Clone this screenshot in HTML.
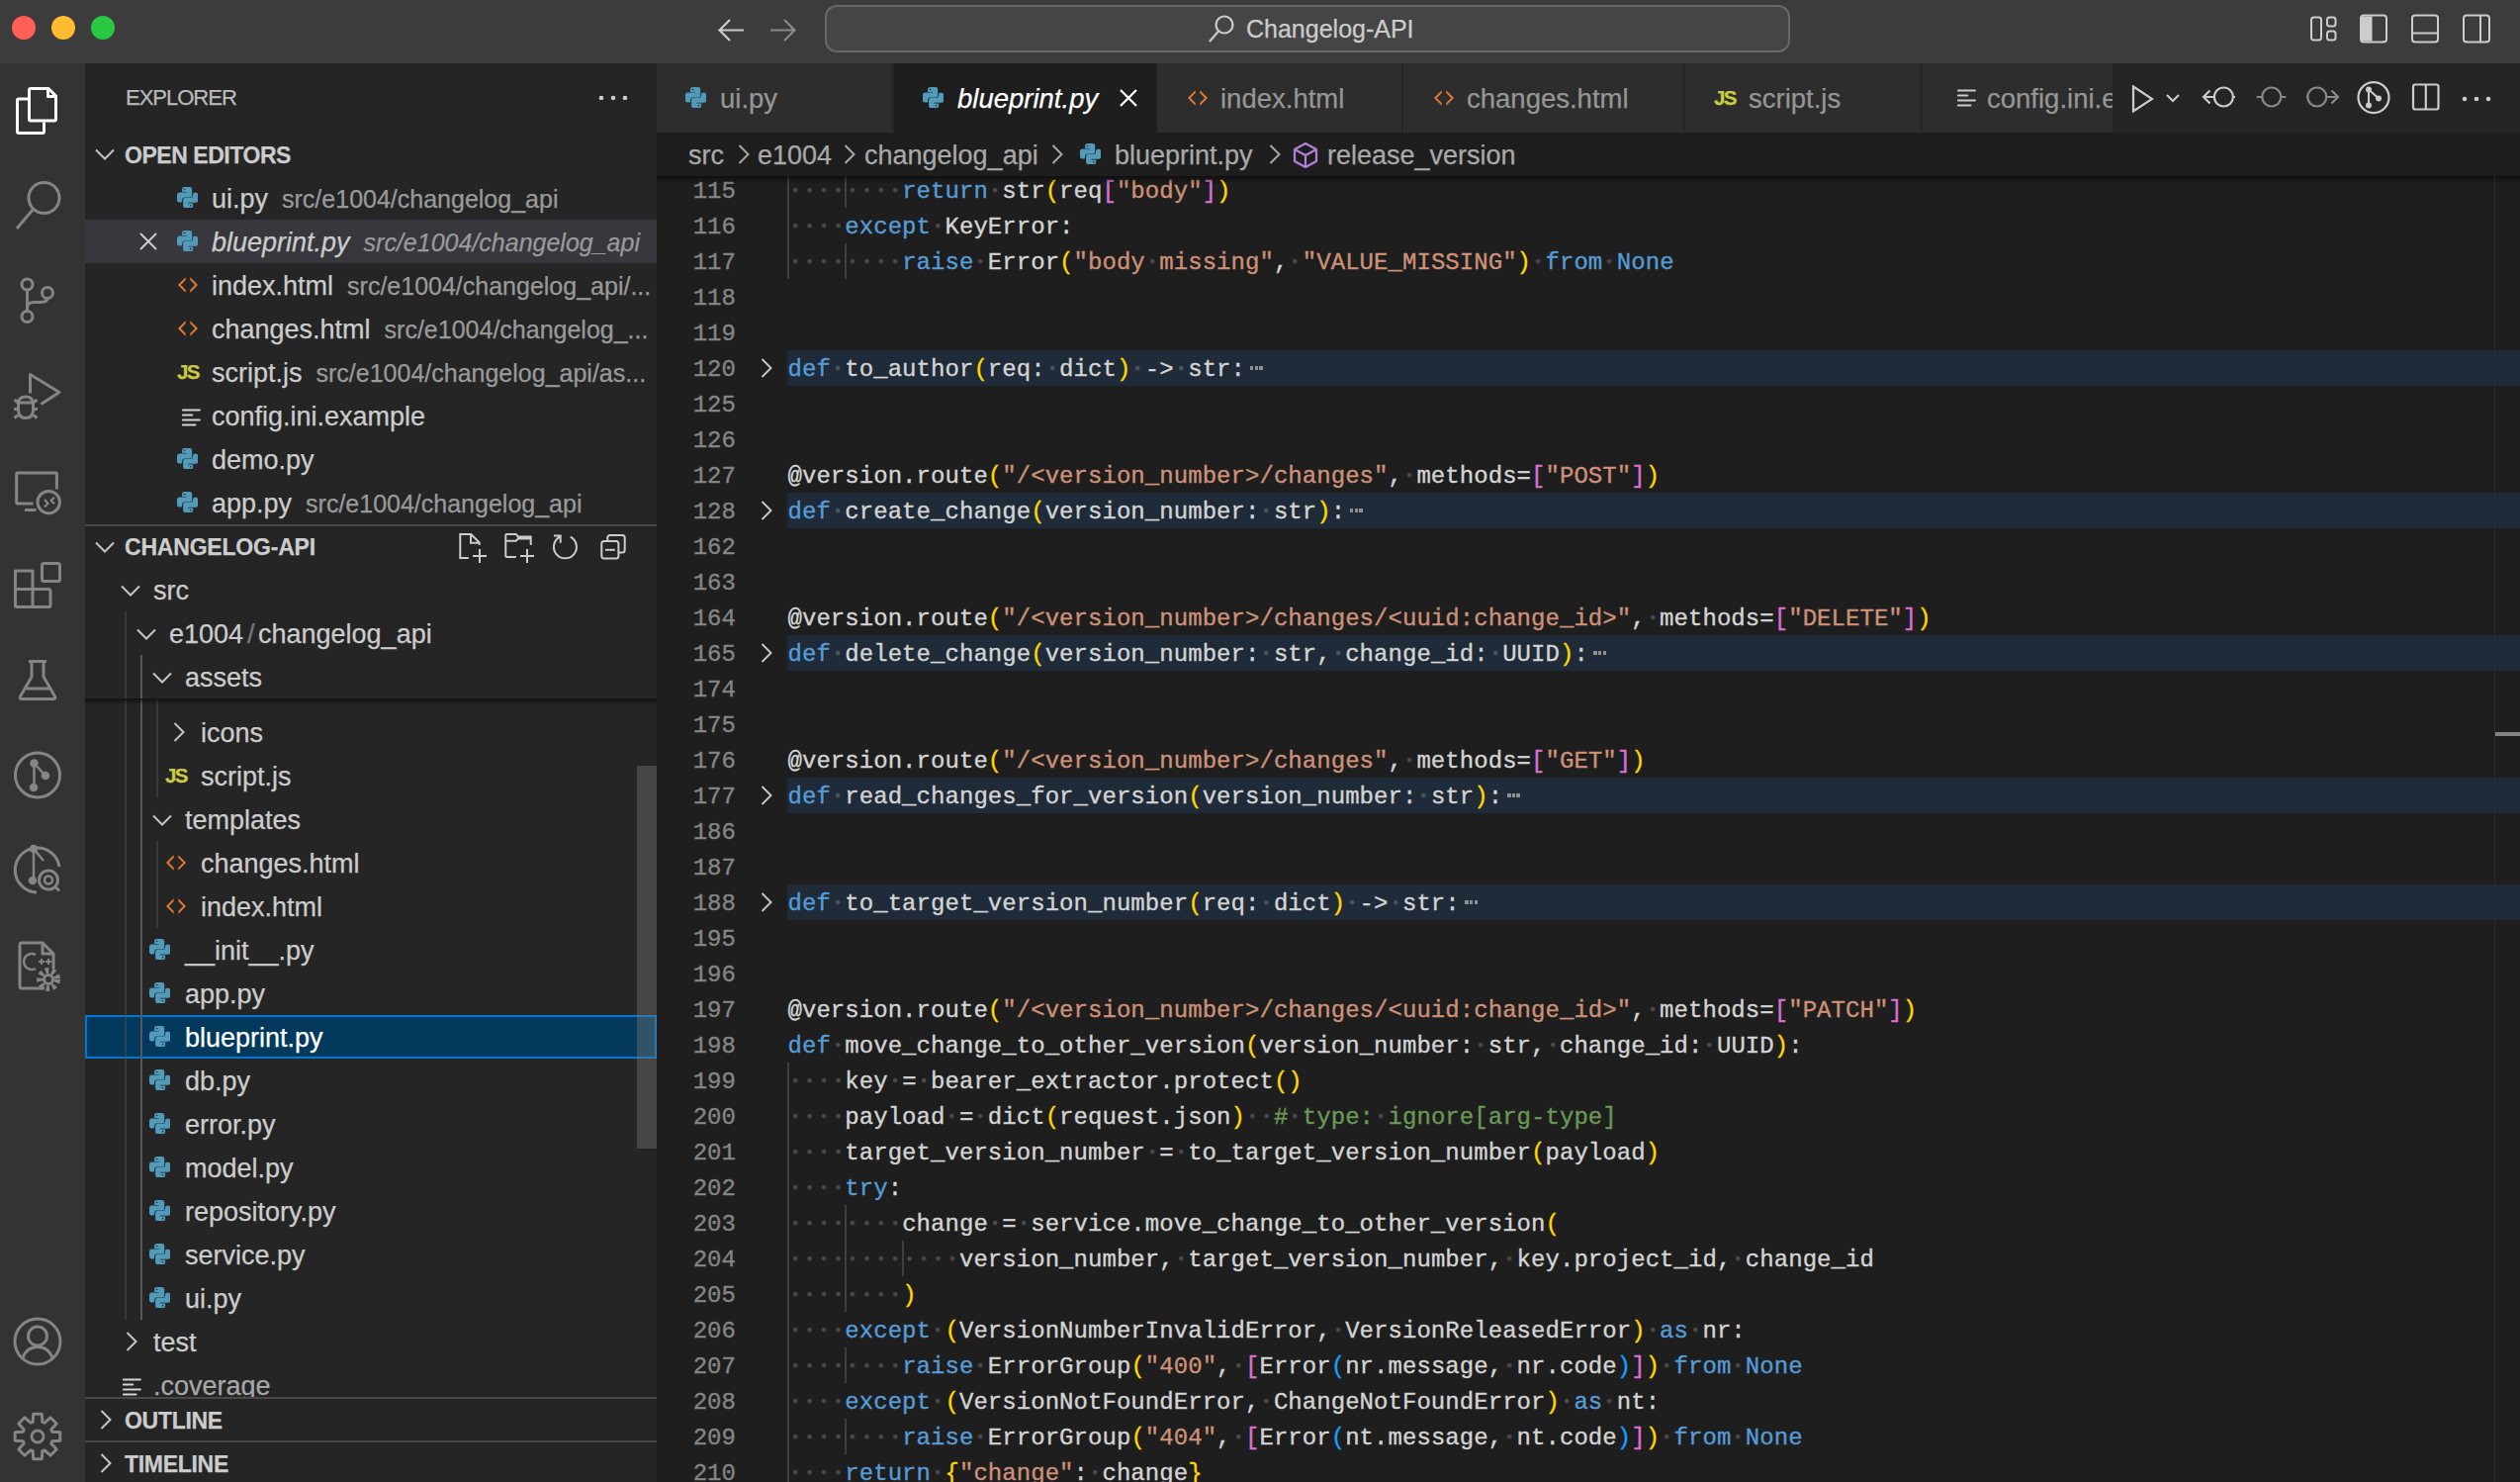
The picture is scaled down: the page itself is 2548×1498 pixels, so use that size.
<!DOCTYPE html><html><head><meta charset="utf-8"><style>
html,body{margin:0;padding:0;width:2548px;height:1498px;overflow:hidden;background:#1e1e1e;position:relative;font-family:'Liberation Sans', sans-serif;-webkit-text-stroke:0.25px currentColor}
div,svg{box-sizing:border-box}
.ln{position:absolute;left:664px;width:1884px;height:36px;font-family:'Liberation Mono', monospace;font-size:24px;line-height:36px;white-space:pre;color:#d4d4d4;letter-spacing:0.05px;-webkit-text-stroke:0.35px currentColor}
.num{position:absolute;left:0;top:2px;width:80px;text-align:right;color:#858585}
.code{position:absolute;left:132.5px;top:2px}
.fold{position:absolute;left:132px;right:0;top:0;height:36px;background:#1f2b38}
.ws{background:radial-gradient(circle at 50% 45%,rgba(227,228,226,0.22) 0,rgba(227,228,226,0.22) 1.8px,rgba(227,228,226,0) 2.7px) 0 0/14.45px 100% repeat-x}
.kw{color:#569cd6} .str{color:#ce9178} .cm{color:#6a9955}
.b1{color:#ffd700} .b2{color:#da70d6} .b3{color:#179fff}
.guide{position:absolute;top:0;width:2px;height:36px;background:#404040}
</style></head><body><div style="position:absolute;left:0px;top:0px;width:2548px;height:64px;background:#3c3c3c;"></div><div style="position:absolute;left:12px;top:16px;width:24px;height:24px;border-radius:50%;background:#ff5f57"></div><div style="position:absolute;left:52px;top:16px;width:24px;height:24px;border-radius:50%;background:#febc2e"></div><div style="position:absolute;left:92px;top:16px;width:24px;height:24px;border-radius:50%;background:#28c840"></div><svg style="position:absolute;left:725px;top:18px" width="30" height="26" viewBox="0 0 30 26"><path d="M2.5 12.5 H27 M13 2 L2.5 12.5 L13 23" fill="none" stroke="#cccccc" stroke-width="2.2"/></svg><svg style="position:absolute;left:777px;top:18px" width="30" height="26" viewBox="0 0 30 26"><path d="M2 12.5 H26.5 M16 2 L26.5 12.5 L16 23" fill="none" stroke="#8a8a8a" stroke-width="2.2"/></svg><div style="position:absolute;left:834px;top:5px;width:976px;height:48px;border:2px solid #686868;border-radius:12px;background:#454545"></div><svg style="position:absolute;left:1220px;top:13px" width="30" height="32" viewBox="0 0 30 32"><circle cx="18" cy="12" r="8.5" fill="none" stroke="#cccccc" stroke-width="2.2"/><path d="M12 18.5 L3 29" stroke="#cccccc" stroke-width="2.2"/></svg><div style="position:absolute;left:1260px;top:13.5px;font-family:'Liberation Sans', sans-serif;font-size:25px;line-height:30px;color:#cccccc;white-space:pre;">Changelog-API</div><svg style="position:absolute;left:2334px;top:14px" width="200" height="32" viewBox="0 0 200 32">
<g fill="none" stroke="#cccccc" stroke-width="2">
<rect x="3" y="3.5" width="10" height="23" rx="2.5"/><rect x="19" y="3.5" width="8.5" height="9" rx="2.5"/><rect x="19" y="17.5" width="8.5" height="9" rx="2.5"/>
<rect x="53" y="1.5" width="26" height="27" rx="3"/>
<rect x="105" y="1.5" width="26" height="27" rx="3"/><path d="M105 19.5 H131"/>
<rect x="157" y="1.5" width="26" height="27" rx="3"/><path d="M174 1.5 V28.5"/>
</g><path d="M55 2.5 H64.5 V27.5 H55 Q54 27.5 54 26.5 V3.5 Q54 2.5 55 2.5Z" fill="#cccccc"/></svg><div style="position:absolute;left:0px;top:64px;width:86px;height:1434px;background:#333333;"></div><svg style="position:absolute;left:0;top:64px" width="86" height="1434" viewBox="0 64 86 1434">
<g fill="none" stroke-width="3" stroke-linejoin="round">
<path stroke="#ffffff" d="M28.5 100 H19 Q17.5 100 17.5 101.5 V133 Q17.5 134.5 19 134.5 H43 Q44.5 134.5 44.5 133 V123.5"/>
<path stroke="#ffffff" d="M31 89.5 H49 L56.5 97 V120.5 Q56.5 122 55 122 H31 Q29.5 122 29.5 120.5 V91 Q29.5 89.5 31 89.5 Z M48.5 89.5 V97.5 H56.5"/>
<circle stroke="#858585" cx="44.5" cy="200" r="15.5"/><path stroke="#858585" d="M33.5 211.5 L17 231"/>
<circle stroke="#858585" cx="27.5" cy="287.5" r="5.5"/><circle stroke="#858585" cx="27.5" cy="320" r="5.5"/><circle stroke="#858585" cx="48" cy="296" r="5.5"/>
<path stroke="#858585" d="M27.5 293 V314.5 M48 301.5 Q48 305.5 40 305.5 H34 Q27.5 305.5 27.5 311"/>
<path stroke="#858585" d="M30.5 397.5 V378.5 L60 396.5 L41.5 408.5"/>
<path stroke="#858585" d="M18.5 408 Q18.5 401 26 401 Q33.5 401 33.5 408 V414 Q33.5 422.5 26 422.5 Q18.5 422.5 18.5 414 Z M18.5 407 H33.5 M14 413.5 H18.5 M33.5 413.5 H38 M14.5 404 L19 407.5 M37.5 404 L33 407.5 M14.5 422.5 L19.5 418.5 M37.5 422.5 L32.5 418.5"/>
<path stroke="#858585" d="M33.5 509 H18 Q16.7 509 16.7 507.7 V479.3 Q16.7 478 18 478 H56 Q57.4 478 57.4 479.3 V494.5 M25 515.5 H36.5"/>
<circle stroke="#858585" cx="49.2" cy="507.6" r="11.2"/><path stroke="#858585" stroke-width="2.2" d="M45 505 L48.5 508.8 L45 512.5 M55 502.7 L51.6 505.9 L55 509.3"/>
<path stroke="#858585" d="M15.5 577 H33 V613.5 H17 Q15.5 613.5 15.5 612 Z M15.5 595.5 H51 M51 595.5 V612 Q51 613.5 49.5 613.5 H33"/><rect stroke="#858585" x="42.5" y="569.5" width="18" height="18" rx="2"/>
<path stroke="#858585" d="M29 668.5 H47 M32 668.5 V684 L20.5 704 Q19.5 706.5 22 706.5 H54 Q56.5 706.5 55.5 704 L44 684 V668.5 M25 696 H51"/>
<circle stroke="#858585" cx="38" cy="783.5" r="22.5"/>
<circle cx="34.5" cy="771.5" r="4.3" fill="#858585" stroke="none"/><circle cx="34" cy="796" r="4.3" fill="#858585" stroke="none"/><circle cx="46" cy="784" r="4.3" fill="#858585" stroke="none"/><path stroke="#858585" stroke-width="2.5" d="M34.5 771.5 V796 M34.5 771.5 L46 784"/>
<path stroke="#858585" d="M60 876 A22.5 22.5 0 1 0 37 902"/>
<circle cx="34" cy="858" r="4.3" fill="#858585" stroke="none"/><circle cx="33" cy="890" r="4.3" fill="#858585" stroke="none"/><path stroke="#858585" stroke-width="2.5" d="M34 858 V890 M34 858 L44 870"/>
<circle stroke="#858585" cx="49" cy="889.5" r="9.5"/><circle stroke="#858585" stroke-width="2.5" cx="49" cy="889.5" r="4"/><path stroke="#858585" d="M55.5 896 L60 900.5"/>
<path stroke="#858585" d="M45 999 H22 Q20 999 20 997 V955 Q20 953 22 953 H43 L54 964 V979 M43 953 V964 H54"/>
<path stroke="#858585" stroke-width="2.5" d="M36 965 A8 8 0 1 0 36 979"/><path stroke="#858585" stroke-width="2" d="M39 972 H45 M42 969 V975 M46 972 H52 M49 969 V975"/>
<circle stroke="#858585" stroke-width="6" stroke-dasharray="3.5 3" cx="49" cy="990" r="9"/><circle stroke="#858585" cx="49" cy="990" r="4.5"/>
<circle stroke="#858585" cx="38" cy="1356" r="23"/><circle stroke="#858585" cx="38" cy="1350.5" r="9.5"/><path stroke="#858585" d="M23 1372.5 Q27 1361.5 38 1361.5 Q49 1361.5 53 1372.5"/>
</g>
<path fill="none" stroke="#858585" stroke-width="3" stroke-linejoin="round" d="M60.8 1447.7 L60.8 1456.3 L52.7 1456.8 L51.8 1459.0 L57.2 1465.0 L51.0 1471.2 L45.0 1465.8 L42.8 1466.7 L42.3 1474.8 L33.7 1474.8 L33.2 1466.7 L31.0 1465.8 L25.0 1471.2 L18.8 1465.0 L24.2 1459.0 L23.3 1456.8 L15.2 1456.3 L15.2 1447.7 L23.3 1447.2 L24.2 1445.0 L18.8 1439.0 L25.0 1432.8 L31.0 1438.2 L33.2 1437.3 L33.7 1429.2 L42.3 1429.2 L42.8 1437.3 L45.0 1438.2 L51.0 1432.8 L57.2 1439.0 L51.8 1445.0 L52.7 1447.2Z"/><circle cx="38" cy="1452" r="6" fill="none" stroke="#858585" stroke-width="3"/>
</svg><div style="position:absolute;left:86px;top:64px;width:578px;height:1434px;background:#252526;"></div><div style="position:absolute;left:127px;top:86px;font-family:'Liberation Sans', sans-serif;font-size:22px;line-height:26px;color:#bbbbbb;white-space:pre;letter-spacing:-1px">EXPLORER</div><svg style="position:absolute;left:604px;top:94px" width="32" height="10" viewBox="0 0 32 10"><g fill="#cccccc"><circle cx="4" cy="5" r="2.3"/><circle cx="16" cy="5" r="2.3"/><circle cx="28" cy="5" r="2.3"/></g></svg><svg style="position:absolute;left:96px;top:150px" width="20" height="12" viewBox="0 0 20 12"><path d="M1 1.5 L10 10.5 L19 1.5" fill="none" stroke="#c5c5c5" stroke-width="2"/></svg><div style="position:absolute;left:126px;top:144px;font-family:'Liberation Sans', sans-serif;font-size:23px;line-height:26px;color:#cccccc;white-space:pre;font-weight:bold;letter-spacing:-0.45px">OPEN EDITORS</div><svg style="position:absolute;left:179px;top:189px" width="21.3" height="21.3" viewBox="0 0 21.3 21.3"><path fill="#519aba" d="M7.6 0H12.7A2.5 2.5 0 0 1 15.2 2.5V8A2.5 2.5 0 0 1 12.7 10.5H7.7A2.5 2.5 0 0 0 5.2 13V14A1.5 1.5 0 0 1 3.7 15.5H2.5A2.5 2.5 0 0 1 0 13V8A2.5 2.5 0 0 1 2.5 5.5H10V4.9H5.1V2.5A2.5 2.5 0 0 1 7.6 0Z"/><path fill="#519aba" transform="rotate(180 10.65 10.65)" d="M7.6 0H12.7A2.5 2.5 0 0 1 15.2 2.5V8A2.5 2.5 0 0 1 12.7 10.5H7.7A2.5 2.5 0 0 0 5.2 13V14A1.5 1.5 0 0 1 3.7 15.5H2.5A2.5 2.5 0 0 1 0 13V8A2.5 2.5 0 0 1 2.5 5.5H10V4.9H5.1V2.5A2.5 2.5 0 0 1 7.6 0Z"/><circle cx="7.7" cy="2.6" r="0.75" fill="#1e1e1e"/><circle cx="13.6" cy="18.7" r="0.75" fill="#1e1e1e"/></svg><div style="position:absolute;left:214px;top:179px;height:44px;font-family:'Liberation Sans', sans-serif;font-size:27px;line-height:44px;color:#cccccc;white-space:pre;">ui.py<span style="color:#9a9a9a;font-size:25px;margin-left:14px">src/e1004/changelog_api</span></div><div style="position:absolute;left:86px;top:222px;width:578px;height:44px;background:#37373d;"></div><svg style="position:absolute;left:140px;top:234px" width="20" height="20" viewBox="0 0 20 20"><path d="M2 2 L18 18 M18 2 L2 18" stroke="#cccccc" stroke-width="2"/></svg><svg style="position:absolute;left:179px;top:233px" width="21.3" height="21.3" viewBox="0 0 21.3 21.3"><path fill="#519aba" d="M7.6 0H12.7A2.5 2.5 0 0 1 15.2 2.5V8A2.5 2.5 0 0 1 12.7 10.5H7.7A2.5 2.5 0 0 0 5.2 13V14A1.5 1.5 0 0 1 3.7 15.5H2.5A2.5 2.5 0 0 1 0 13V8A2.5 2.5 0 0 1 2.5 5.5H10V4.9H5.1V2.5A2.5 2.5 0 0 1 7.6 0Z"/><path fill="#519aba" transform="rotate(180 10.65 10.65)" d="M7.6 0H12.7A2.5 2.5 0 0 1 15.2 2.5V8A2.5 2.5 0 0 1 12.7 10.5H7.7A2.5 2.5 0 0 0 5.2 13V14A1.5 1.5 0 0 1 3.7 15.5H2.5A2.5 2.5 0 0 1 0 13V8A2.5 2.5 0 0 1 2.5 5.5H10V4.9H5.1V2.5A2.5 2.5 0 0 1 7.6 0Z"/><circle cx="7.7" cy="2.6" r="0.75" fill="#1e1e1e"/><circle cx="13.6" cy="18.7" r="0.75" fill="#1e1e1e"/></svg><div style="position:absolute;left:214px;top:223px;height:44px;font-family:'Liberation Sans', sans-serif;font-size:27px;line-height:44px;color:#cccccc;white-space:pre;font-style:italic;">blueprint.py<span style="color:#9a9a9a;font-size:25px;margin-left:14px">src/e1004/changelog_api</span></div><svg style="position:absolute;left:179.5px;top:279.7px" width="20" height="16" viewBox="0 0 20 15.4"><path fill="#e37933" d="M7.7 0L0 7.7L7.7 15.4V12.6L2.8 7.7L7.7 2.8ZM12.3 0L20 7.7L12.3 15.4V12.6L17.2 7.7L12.3 2.8Z"/></svg><div style="position:absolute;left:214px;top:267px;height:44px;font-family:'Liberation Sans', sans-serif;font-size:27px;line-height:44px;color:#cccccc;white-space:pre;">index.html<span style="color:#9a9a9a;font-size:25px;margin-left:14px">src/e1004/changelog_api/...</span></div><svg style="position:absolute;left:179.5px;top:323.7px" width="20" height="16" viewBox="0 0 20 15.4"><path fill="#e37933" d="M7.7 0L0 7.7L7.7 15.4V12.6L2.8 7.7L7.7 2.8ZM12.3 0L20 7.7L12.3 15.4V12.6L17.2 7.7L12.3 2.8Z"/></svg><div style="position:absolute;left:214px;top:311px;height:44px;font-family:'Liberation Sans', sans-serif;font-size:27px;line-height:44px;color:#cccccc;white-space:pre;">changes.html<span style="color:#9a9a9a;font-size:25px;margin-left:14px">src/e1004/changelog_...</span></div><div style="position:absolute;left:179px;top:365px;font:bold 20.5px/21px 'Liberation Sans', sans-serif;color:#cbcb41;letter-spacing:-1.6px">JS</div><div style="position:absolute;left:214px;top:355px;height:44px;font-family:'Liberation Sans', sans-serif;font-size:27px;line-height:44px;color:#cccccc;white-space:pre;">script.js<span style="color:#9a9a9a;font-size:25px;margin-left:14px">src/e1004/changelog_api/as...</span></div><svg style="position:absolute;left:184px;top:412.5px" width="19" height="19" viewBox="0 0 19 19"><path d="M1 1.5h16.8M1 6.5h9.2M1 11.5h16.8M1 16.5h12.4" stroke="#d4d4d4" stroke-width="2.2" stroke-linecap="round"/></svg><div style="position:absolute;left:214px;top:399px;height:44px;font-family:'Liberation Sans', sans-serif;font-size:27px;line-height:44px;color:#cccccc;white-space:pre;">config.ini.example</div><svg style="position:absolute;left:179px;top:453px" width="21.3" height="21.3" viewBox="0 0 21.3 21.3"><path fill="#519aba" d="M7.6 0H12.7A2.5 2.5 0 0 1 15.2 2.5V8A2.5 2.5 0 0 1 12.7 10.5H7.7A2.5 2.5 0 0 0 5.2 13V14A1.5 1.5 0 0 1 3.7 15.5H2.5A2.5 2.5 0 0 1 0 13V8A2.5 2.5 0 0 1 2.5 5.5H10V4.9H5.1V2.5A2.5 2.5 0 0 1 7.6 0Z"/><path fill="#519aba" transform="rotate(180 10.65 10.65)" d="M7.6 0H12.7A2.5 2.5 0 0 1 15.2 2.5V8A2.5 2.5 0 0 1 12.7 10.5H7.7A2.5 2.5 0 0 0 5.2 13V14A1.5 1.5 0 0 1 3.7 15.5H2.5A2.5 2.5 0 0 1 0 13V8A2.5 2.5 0 0 1 2.5 5.5H10V4.9H5.1V2.5A2.5 2.5 0 0 1 7.6 0Z"/><circle cx="7.7" cy="2.6" r="0.75" fill="#1e1e1e"/><circle cx="13.6" cy="18.7" r="0.75" fill="#1e1e1e"/></svg><div style="position:absolute;left:214px;top:443px;height:44px;font-family:'Liberation Sans', sans-serif;font-size:27px;line-height:44px;color:#cccccc;white-space:pre;">demo.py</div><svg style="position:absolute;left:179px;top:497px" width="21.3" height="21.3" viewBox="0 0 21.3 21.3"><path fill="#519aba" d="M7.6 0H12.7A2.5 2.5 0 0 1 15.2 2.5V8A2.5 2.5 0 0 1 12.7 10.5H7.7A2.5 2.5 0 0 0 5.2 13V14A1.5 1.5 0 0 1 3.7 15.5H2.5A2.5 2.5 0 0 1 0 13V8A2.5 2.5 0 0 1 2.5 5.5H10V4.9H5.1V2.5A2.5 2.5 0 0 1 7.6 0Z"/><path fill="#519aba" transform="rotate(180 10.65 10.65)" d="M7.6 0H12.7A2.5 2.5 0 0 1 15.2 2.5V8A2.5 2.5 0 0 1 12.7 10.5H7.7A2.5 2.5 0 0 0 5.2 13V14A1.5 1.5 0 0 1 3.7 15.5H2.5A2.5 2.5 0 0 1 0 13V8A2.5 2.5 0 0 1 2.5 5.5H10V4.9H5.1V2.5A2.5 2.5 0 0 1 7.6 0Z"/><circle cx="7.7" cy="2.6" r="0.75" fill="#1e1e1e"/><circle cx="13.6" cy="18.7" r="0.75" fill="#1e1e1e"/></svg><div style="position:absolute;left:214px;top:487px;height:44px;font-family:'Liberation Sans', sans-serif;font-size:27px;line-height:44px;color:#cccccc;white-space:pre;">app.py<span style="color:#9a9a9a;font-size:25px;margin-left:14px">src/e1004/changelog_api</span></div><div style="position:absolute;left:86px;top:530px;width:578px;height:2px;background:#484848;"></div><svg style="position:absolute;left:96px;top:547px" width="20" height="12" viewBox="0 0 20 12"><path d="M1 1.5 L10 10.5 L19 1.5" fill="none" stroke="#c5c5c5" stroke-width="2"/></svg><div style="position:absolute;left:126px;top:540px;font-family:'Liberation Sans', sans-serif;font-size:23px;line-height:26px;color:#cccccc;white-space:pre;font-weight:bold;letter-spacing:-0.2px">CHANGELOG-API</div><svg style="position:absolute;left:450px;top:530px" width="200" height="50" viewBox="450 530 200 50"><g fill="none" stroke="#cccccc" stroke-width="2">
<path d="M473.8 564 H465.3 V540.1 H476.3 L484.7 548.5 V551 M476 540.1 V548.7 H484.7 M485 555 V569 M478 562.1 H492"/>
<path d="M521.8 562.9 H512.3 Q511.3 562.9 511.3 561.9 V541.1 Q511.3 540.1 512.3 540.1 H521.8 L523.8 542.4 H536.7 V551 M511.3 546.7 H521.8 L523.8 544.4 H536.7 M533 555 V569 M526 562.1 H540"/>
<path d="M566.2 542.6 A11.5 11.5 0 1 0 576.7 542.6 M560 541.5 H566.7 V548.7"/>
<rect x="614.3" y="541.1" width="17.4" height="17.5" rx="2.5"/>
<rect x="608.3" y="547" width="17.1" height="17.5" rx="2.5" fill="#252526"/>
<path d="M611.9 555.8 H621.8"/>
</g></svg><div style="position:absolute;left:86px;top:575px;width:578px;height:838px;overflow:hidden"><div style="position:absolute;left:-86px;top:-575px;width:2548px;height:1498px"><svg style="position:absolute;left:175px;top:730px" width="12" height="20" viewBox="0 0 12 20"><path d="M1.5 1 L10.5 10 L1.5 19" fill="none" stroke="#c5c5c5" stroke-width="2"/></svg><div style="position:absolute;left:203px;top:719px;height:44px;font-family:'Liberation Sans', sans-serif;font-size:27px;line-height:44px;color:#cccccc;white-space:pre;">icons</div><div style="position:absolute;left:167px;top:773px;font:bold 20.5px/21px 'Liberation Sans', sans-serif;color:#cbcb41;letter-spacing:-1.6px">JS</div><div style="position:absolute;left:203px;top:763px;height:44px;font-family:'Liberation Sans', sans-serif;font-size:27px;line-height:44px;color:#cccccc;white-space:pre;">script.js</div><svg style="position:absolute;left:154px;top:823px" width="20" height="12" viewBox="0 0 20 12"><path d="M1 1.5 L10 10.5 L19 1.5" fill="none" stroke="#c5c5c5" stroke-width="2"/></svg><div style="position:absolute;left:187px;top:807px;height:44px;font-family:'Liberation Sans', sans-serif;font-size:27px;line-height:44px;color:#cccccc;white-space:pre;">templates</div><svg style="position:absolute;left:167.5px;top:863.7px" width="20" height="16" viewBox="0 0 20 15.4"><path fill="#e37933" d="M7.7 0L0 7.7L7.7 15.4V12.6L2.8 7.7L7.7 2.8ZM12.3 0L20 7.7L12.3 15.4V12.6L17.2 7.7L12.3 2.8Z"/></svg><div style="position:absolute;left:203px;top:851px;height:44px;font-family:'Liberation Sans', sans-serif;font-size:27px;line-height:44px;color:#cccccc;white-space:pre;">changes.html</div><svg style="position:absolute;left:167.5px;top:907.7px" width="20" height="16" viewBox="0 0 20 15.4"><path fill="#e37933" d="M7.7 0L0 7.7L7.7 15.4V12.6L2.8 7.7L7.7 2.8ZM12.3 0L20 7.7L12.3 15.4V12.6L17.2 7.7L12.3 2.8Z"/></svg><div style="position:absolute;left:203px;top:895px;height:44px;font-family:'Liberation Sans', sans-serif;font-size:27px;line-height:44px;color:#cccccc;white-space:pre;">index.html</div><svg style="position:absolute;left:151px;top:949px" width="21.3" height="21.3" viewBox="0 0 21.3 21.3"><path fill="#519aba" d="M7.6 0H12.7A2.5 2.5 0 0 1 15.2 2.5V8A2.5 2.5 0 0 1 12.7 10.5H7.7A2.5 2.5 0 0 0 5.2 13V14A1.5 1.5 0 0 1 3.7 15.5H2.5A2.5 2.5 0 0 1 0 13V8A2.5 2.5 0 0 1 2.5 5.5H10V4.9H5.1V2.5A2.5 2.5 0 0 1 7.6 0Z"/><path fill="#519aba" transform="rotate(180 10.65 10.65)" d="M7.6 0H12.7A2.5 2.5 0 0 1 15.2 2.5V8A2.5 2.5 0 0 1 12.7 10.5H7.7A2.5 2.5 0 0 0 5.2 13V14A1.5 1.5 0 0 1 3.7 15.5H2.5A2.5 2.5 0 0 1 0 13V8A2.5 2.5 0 0 1 2.5 5.5H10V4.9H5.1V2.5A2.5 2.5 0 0 1 7.6 0Z"/><circle cx="7.7" cy="2.6" r="0.75" fill="#1e1e1e"/><circle cx="13.6" cy="18.7" r="0.75" fill="#1e1e1e"/></svg><div style="position:absolute;left:187px;top:939px;height:44px;font-family:'Liberation Sans', sans-serif;font-size:27px;line-height:44px;color:#cccccc;white-space:pre;">__init__.py</div><svg style="position:absolute;left:151px;top:993px" width="21.3" height="21.3" viewBox="0 0 21.3 21.3"><path fill="#519aba" d="M7.6 0H12.7A2.5 2.5 0 0 1 15.2 2.5V8A2.5 2.5 0 0 1 12.7 10.5H7.7A2.5 2.5 0 0 0 5.2 13V14A1.5 1.5 0 0 1 3.7 15.5H2.5A2.5 2.5 0 0 1 0 13V8A2.5 2.5 0 0 1 2.5 5.5H10V4.9H5.1V2.5A2.5 2.5 0 0 1 7.6 0Z"/><path fill="#519aba" transform="rotate(180 10.65 10.65)" d="M7.6 0H12.7A2.5 2.5 0 0 1 15.2 2.5V8A2.5 2.5 0 0 1 12.7 10.5H7.7A2.5 2.5 0 0 0 5.2 13V14A1.5 1.5 0 0 1 3.7 15.5H2.5A2.5 2.5 0 0 1 0 13V8A2.5 2.5 0 0 1 2.5 5.5H10V4.9H5.1V2.5A2.5 2.5 0 0 1 7.6 0Z"/><circle cx="7.7" cy="2.6" r="0.75" fill="#1e1e1e"/><circle cx="13.6" cy="18.7" r="0.75" fill="#1e1e1e"/></svg><div style="position:absolute;left:187px;top:983px;height:44px;font-family:'Liberation Sans', sans-serif;font-size:27px;line-height:44px;color:#cccccc;white-space:pre;">app.py</div><div style="position:absolute;left:86px;top:1026px;width:578px;height:44px;background:#04395e;border:2px solid #0078d4"></div><svg style="position:absolute;left:151px;top:1037px" width="21.3" height="21.3" viewBox="0 0 21.3 21.3"><path fill="#519aba" d="M7.6 0H12.7A2.5 2.5 0 0 1 15.2 2.5V8A2.5 2.5 0 0 1 12.7 10.5H7.7A2.5 2.5 0 0 0 5.2 13V14A1.5 1.5 0 0 1 3.7 15.5H2.5A2.5 2.5 0 0 1 0 13V8A2.5 2.5 0 0 1 2.5 5.5H10V4.9H5.1V2.5A2.5 2.5 0 0 1 7.6 0Z"/><path fill="#519aba" transform="rotate(180 10.65 10.65)" d="M7.6 0H12.7A2.5 2.5 0 0 1 15.2 2.5V8A2.5 2.5 0 0 1 12.7 10.5H7.7A2.5 2.5 0 0 0 5.2 13V14A1.5 1.5 0 0 1 3.7 15.5H2.5A2.5 2.5 0 0 1 0 13V8A2.5 2.5 0 0 1 2.5 5.5H10V4.9H5.1V2.5A2.5 2.5 0 0 1 7.6 0Z"/><circle cx="7.7" cy="2.6" r="0.75" fill="#1e1e1e"/><circle cx="13.6" cy="18.7" r="0.75" fill="#1e1e1e"/></svg><div style="position:absolute;left:187px;top:1027px;height:44px;font-family:'Liberation Sans', sans-serif;font-size:27px;line-height:44px;color:#ffffff;white-space:pre;">blueprint.py</div><svg style="position:absolute;left:151px;top:1081px" width="21.3" height="21.3" viewBox="0 0 21.3 21.3"><path fill="#519aba" d="M7.6 0H12.7A2.5 2.5 0 0 1 15.2 2.5V8A2.5 2.5 0 0 1 12.7 10.5H7.7A2.5 2.5 0 0 0 5.2 13V14A1.5 1.5 0 0 1 3.7 15.5H2.5A2.5 2.5 0 0 1 0 13V8A2.5 2.5 0 0 1 2.5 5.5H10V4.9H5.1V2.5A2.5 2.5 0 0 1 7.6 0Z"/><path fill="#519aba" transform="rotate(180 10.65 10.65)" d="M7.6 0H12.7A2.5 2.5 0 0 1 15.2 2.5V8A2.5 2.5 0 0 1 12.7 10.5H7.7A2.5 2.5 0 0 0 5.2 13V14A1.5 1.5 0 0 1 3.7 15.5H2.5A2.5 2.5 0 0 1 0 13V8A2.5 2.5 0 0 1 2.5 5.5H10V4.9H5.1V2.5A2.5 2.5 0 0 1 7.6 0Z"/><circle cx="7.7" cy="2.6" r="0.75" fill="#1e1e1e"/><circle cx="13.6" cy="18.7" r="0.75" fill="#1e1e1e"/></svg><div style="position:absolute;left:187px;top:1071px;height:44px;font-family:'Liberation Sans', sans-serif;font-size:27px;line-height:44px;color:#cccccc;white-space:pre;">db.py</div><svg style="position:absolute;left:151px;top:1125px" width="21.3" height="21.3" viewBox="0 0 21.3 21.3"><path fill="#519aba" d="M7.6 0H12.7A2.5 2.5 0 0 1 15.2 2.5V8A2.5 2.5 0 0 1 12.7 10.5H7.7A2.5 2.5 0 0 0 5.2 13V14A1.5 1.5 0 0 1 3.7 15.5H2.5A2.5 2.5 0 0 1 0 13V8A2.5 2.5 0 0 1 2.5 5.5H10V4.9H5.1V2.5A2.5 2.5 0 0 1 7.6 0Z"/><path fill="#519aba" transform="rotate(180 10.65 10.65)" d="M7.6 0H12.7A2.5 2.5 0 0 1 15.2 2.5V8A2.5 2.5 0 0 1 12.7 10.5H7.7A2.5 2.5 0 0 0 5.2 13V14A1.5 1.5 0 0 1 3.7 15.5H2.5A2.5 2.5 0 0 1 0 13V8A2.5 2.5 0 0 1 2.5 5.5H10V4.9H5.1V2.5A2.5 2.5 0 0 1 7.6 0Z"/><circle cx="7.7" cy="2.6" r="0.75" fill="#1e1e1e"/><circle cx="13.6" cy="18.7" r="0.75" fill="#1e1e1e"/></svg><div style="position:absolute;left:187px;top:1115px;height:44px;font-family:'Liberation Sans', sans-serif;font-size:27px;line-height:44px;color:#cccccc;white-space:pre;">error.py</div><svg style="position:absolute;left:151px;top:1169px" width="21.3" height="21.3" viewBox="0 0 21.3 21.3"><path fill="#519aba" d="M7.6 0H12.7A2.5 2.5 0 0 1 15.2 2.5V8A2.5 2.5 0 0 1 12.7 10.5H7.7A2.5 2.5 0 0 0 5.2 13V14A1.5 1.5 0 0 1 3.7 15.5H2.5A2.5 2.5 0 0 1 0 13V8A2.5 2.5 0 0 1 2.5 5.5H10V4.9H5.1V2.5A2.5 2.5 0 0 1 7.6 0Z"/><path fill="#519aba" transform="rotate(180 10.65 10.65)" d="M7.6 0H12.7A2.5 2.5 0 0 1 15.2 2.5V8A2.5 2.5 0 0 1 12.7 10.5H7.7A2.5 2.5 0 0 0 5.2 13V14A1.5 1.5 0 0 1 3.7 15.5H2.5A2.5 2.5 0 0 1 0 13V8A2.5 2.5 0 0 1 2.5 5.5H10V4.9H5.1V2.5A2.5 2.5 0 0 1 7.6 0Z"/><circle cx="7.7" cy="2.6" r="0.75" fill="#1e1e1e"/><circle cx="13.6" cy="18.7" r="0.75" fill="#1e1e1e"/></svg><div style="position:absolute;left:187px;top:1159px;height:44px;font-family:'Liberation Sans', sans-serif;font-size:27px;line-height:44px;color:#cccccc;white-space:pre;">model.py</div><svg style="position:absolute;left:151px;top:1213px" width="21.3" height="21.3" viewBox="0 0 21.3 21.3"><path fill="#519aba" d="M7.6 0H12.7A2.5 2.5 0 0 1 15.2 2.5V8A2.5 2.5 0 0 1 12.7 10.5H7.7A2.5 2.5 0 0 0 5.2 13V14A1.5 1.5 0 0 1 3.7 15.5H2.5A2.5 2.5 0 0 1 0 13V8A2.5 2.5 0 0 1 2.5 5.5H10V4.9H5.1V2.5A2.5 2.5 0 0 1 7.6 0Z"/><path fill="#519aba" transform="rotate(180 10.65 10.65)" d="M7.6 0H12.7A2.5 2.5 0 0 1 15.2 2.5V8A2.5 2.5 0 0 1 12.7 10.5H7.7A2.5 2.5 0 0 0 5.2 13V14A1.5 1.5 0 0 1 3.7 15.5H2.5A2.5 2.5 0 0 1 0 13V8A2.5 2.5 0 0 1 2.5 5.5H10V4.9H5.1V2.5A2.5 2.5 0 0 1 7.6 0Z"/><circle cx="7.7" cy="2.6" r="0.75" fill="#1e1e1e"/><circle cx="13.6" cy="18.7" r="0.75" fill="#1e1e1e"/></svg><div style="position:absolute;left:187px;top:1203px;height:44px;font-family:'Liberation Sans', sans-serif;font-size:27px;line-height:44px;color:#cccccc;white-space:pre;">repository.py</div><svg style="position:absolute;left:151px;top:1257px" width="21.3" height="21.3" viewBox="0 0 21.3 21.3"><path fill="#519aba" d="M7.6 0H12.7A2.5 2.5 0 0 1 15.2 2.5V8A2.5 2.5 0 0 1 12.7 10.5H7.7A2.5 2.5 0 0 0 5.2 13V14A1.5 1.5 0 0 1 3.7 15.5H2.5A2.5 2.5 0 0 1 0 13V8A2.5 2.5 0 0 1 2.5 5.5H10V4.9H5.1V2.5A2.5 2.5 0 0 1 7.6 0Z"/><path fill="#519aba" transform="rotate(180 10.65 10.65)" d="M7.6 0H12.7A2.5 2.5 0 0 1 15.2 2.5V8A2.5 2.5 0 0 1 12.7 10.5H7.7A2.5 2.5 0 0 0 5.2 13V14A1.5 1.5 0 0 1 3.7 15.5H2.5A2.5 2.5 0 0 1 0 13V8A2.5 2.5 0 0 1 2.5 5.5H10V4.9H5.1V2.5A2.5 2.5 0 0 1 7.6 0Z"/><circle cx="7.7" cy="2.6" r="0.75" fill="#1e1e1e"/><circle cx="13.6" cy="18.7" r="0.75" fill="#1e1e1e"/></svg><div style="position:absolute;left:187px;top:1247px;height:44px;font-family:'Liberation Sans', sans-serif;font-size:27px;line-height:44px;color:#cccccc;white-space:pre;">service.py</div><svg style="position:absolute;left:151px;top:1301px" width="21.3" height="21.3" viewBox="0 0 21.3 21.3"><path fill="#519aba" d="M7.6 0H12.7A2.5 2.5 0 0 1 15.2 2.5V8A2.5 2.5 0 0 1 12.7 10.5H7.7A2.5 2.5 0 0 0 5.2 13V14A1.5 1.5 0 0 1 3.7 15.5H2.5A2.5 2.5 0 0 1 0 13V8A2.5 2.5 0 0 1 2.5 5.5H10V4.9H5.1V2.5A2.5 2.5 0 0 1 7.6 0Z"/><path fill="#519aba" transform="rotate(180 10.65 10.65)" d="M7.6 0H12.7A2.5 2.5 0 0 1 15.2 2.5V8A2.5 2.5 0 0 1 12.7 10.5H7.7A2.5 2.5 0 0 0 5.2 13V14A1.5 1.5 0 0 1 3.7 15.5H2.5A2.5 2.5 0 0 1 0 13V8A2.5 2.5 0 0 1 2.5 5.5H10V4.9H5.1V2.5A2.5 2.5 0 0 1 7.6 0Z"/><circle cx="7.7" cy="2.6" r="0.75" fill="#1e1e1e"/><circle cx="13.6" cy="18.7" r="0.75" fill="#1e1e1e"/></svg><div style="position:absolute;left:187px;top:1291px;height:44px;font-family:'Liberation Sans', sans-serif;font-size:27px;line-height:44px;color:#cccccc;white-space:pre;">ui.py</div><svg style="position:absolute;left:127px;top:1346px" width="12" height="20" viewBox="0 0 12 20"><path d="M1.5 1 L10.5 10 L1.5 19" fill="none" stroke="#c5c5c5" stroke-width="2"/></svg><div style="position:absolute;left:155px;top:1335px;height:44px;font-family:'Liberation Sans', sans-serif;font-size:27px;line-height:44px;color:#cccccc;white-space:pre;">test</div><svg style="position:absolute;left:124px;top:1392.5px" width="19" height="19" viewBox="0 0 19 19"><path d="M1 1.5h16.8M1 6.5h9.2M1 11.5h16.8M1 16.5h12.4" stroke="#d4d4d4" stroke-width="2.2" stroke-linecap="round"/></svg><div style="position:absolute;left:155px;top:1379px;height:44px;font-family:'Liberation Sans', sans-serif;font-size:27px;line-height:44px;color:#a8a8a8;white-space:pre;">.coverage</div><div style="position:absolute;left:126px;top:707px;width:2px;height:627px;background:rgba(88,88,88,0.4);"></div><div style="position:absolute;left:142px;top:707px;width:2px;height:627px;background:#585858;"></div><div style="position:absolute;left:158px;top:707px;width:2px;height:99px;background:rgba(88,88,88,0.4);"></div><div style="position:absolute;left:158px;top:850px;width:2px;height:88px;background:rgba(88,88,88,0.4);"></div><div style="position:absolute;left:644px;top:774px;width:20px;height:387px;background:rgba(121,121,121,0.4);"></div><div style="position:absolute;left:86px;top:575px;width:578px;height:131px;background:#252526;"></div><svg style="position:absolute;left:122px;top:591px" width="20" height="12" viewBox="0 0 20 12"><path d="M1 1.5 L10 10.5 L19 1.5" fill="none" stroke="#c5c5c5" stroke-width="2"/></svg><div style="position:absolute;left:155px;top:575px;height:44px;font-family:'Liberation Sans', sans-serif;font-size:27px;line-height:44px;color:#cccccc;white-space:pre;">src</div><svg style="position:absolute;left:138px;top:635px" width="20" height="12" viewBox="0 0 20 12"><path d="M1 1.5 L10 10.5 L19 1.5" fill="none" stroke="#c5c5c5" stroke-width="2"/></svg><div style="position:absolute;left:171px;top:619px;height:44px;font-family:'Liberation Sans', sans-serif;font-size:27px;line-height:44px;color:#cccccc;white-space:pre;">e1004</div><div style="position:absolute;left:250px;top:619px;height:44px;font-family:'Liberation Sans', sans-serif;font-size:27px;line-height:44px;color:#7a7a7a;white-space:pre;">/</div><div style="position:absolute;left:261px;top:619px;height:44px;font-family:'Liberation Sans', sans-serif;font-size:27px;line-height:44px;color:#cccccc;white-space:pre;">changelog_api</div><svg style="position:absolute;left:154px;top:679px" width="20" height="12" viewBox="0 0 20 12"><path d="M1 1.5 L10 10.5 L19 1.5" fill="none" stroke="#c5c5c5" stroke-width="2"/></svg><div style="position:absolute;left:187px;top:663px;height:44px;font-family:'Liberation Sans', sans-serif;font-size:27px;line-height:44px;color:#cccccc;white-space:pre;">assets</div><div style="position:absolute;left:126px;top:618px;width:2px;height:88px;background:rgba(88,88,88,0.4);"></div><div style="position:absolute;left:142px;top:662px;width:2px;height:44px;background:#585858;"></div><div style="position:absolute;left:86px;top:706px;width:578px;height:7px;background:linear-gradient(rgba(0,0,0,0.5),rgba(0,0,0,0));"></div></div></div><div style="position:absolute;left:86px;top:1412px;width:578px;height:2px;background:#484848;"></div><svg style="position:absolute;left:100.5px;top:1425px" width="12" height="20" viewBox="0 0 12 20"><path d="M1.5 1 L10.5 10 L1.5 19" fill="none" stroke="#c5c5c5" stroke-width="2"/></svg><div style="position:absolute;left:126px;top:1422.5px;font-family:'Liberation Sans', sans-serif;font-size:23px;line-height:26px;color:#cccccc;white-space:pre;font-weight:bold;letter-spacing:-0.3px">OUTLINE</div><div style="position:absolute;left:86px;top:1456px;width:578px;height:2px;background:#484848;"></div><svg style="position:absolute;left:100.5px;top:1469px" width="12" height="20" viewBox="0 0 12 20"><path d="M1.5 1 L10.5 10 L1.5 19" fill="none" stroke="#c5c5c5" stroke-width="2"/></svg><div style="position:absolute;left:126px;top:1466.5px;font-family:'Liberation Sans', sans-serif;font-size:23px;line-height:26px;color:#cccccc;white-space:pre;font-weight:bold;letter-spacing:-0.3px">TIMELINE</div><div style="position:absolute;left:664px;top:64px;width:1884px;height:70px;background:#252526;"></div><div style="position:absolute;left:664px;top:64px;width:238px;height:70px;background:#2d2d2d;overflow:hidden"><div style="position:absolute;left:0;top:-64px;width:238px;height:200px"><svg style="position:absolute;left:29px;top:88px" width="21.3" height="21.3" viewBox="0 0 21.3 21.3"><path fill="#519aba" d="M7.6 0H12.7A2.5 2.5 0 0 1 15.2 2.5V8A2.5 2.5 0 0 1 12.7 10.5H7.7A2.5 2.5 0 0 0 5.2 13V14A1.5 1.5 0 0 1 3.7 15.5H2.5A2.5 2.5 0 0 1 0 13V8A2.5 2.5 0 0 1 2.5 5.5H10V4.9H5.1V2.5A2.5 2.5 0 0 1 7.6 0Z"/><path fill="#519aba" transform="rotate(180 10.65 10.65)" d="M7.6 0H12.7A2.5 2.5 0 0 1 15.2 2.5V8A2.5 2.5 0 0 1 12.7 10.5H7.7A2.5 2.5 0 0 0 5.2 13V14A1.5 1.5 0 0 1 3.7 15.5H2.5A2.5 2.5 0 0 1 0 13V8A2.5 2.5 0 0 1 2.5 5.5H10V4.9H5.1V2.5A2.5 2.5 0 0 1 7.6 0Z"/><circle cx="7.7" cy="2.6" r="0.75" fill="#1e1e1e"/><circle cx="13.6" cy="18.7" r="0.75" fill="#1e1e1e"/></svg><div style="position:absolute;left:64px;top:80px;font-family:'Liberation Sans', sans-serif;font-size:27.5px;line-height:40px;color:#969696;white-space:pre;">ui.py</div></div></div><div style="position:absolute;left:904px;top:64px;width:265px;height:70px;background:#1e1e1e;overflow:hidden"><div style="position:absolute;left:0;top:-64px;width:265px;height:200px"><svg style="position:absolute;left:29px;top:88px" width="21.3" height="21.3" viewBox="0 0 21.3 21.3"><path fill="#519aba" d="M7.6 0H12.7A2.5 2.5 0 0 1 15.2 2.5V8A2.5 2.5 0 0 1 12.7 10.5H7.7A2.5 2.5 0 0 0 5.2 13V14A1.5 1.5 0 0 1 3.7 15.5H2.5A2.5 2.5 0 0 1 0 13V8A2.5 2.5 0 0 1 2.5 5.5H10V4.9H5.1V2.5A2.5 2.5 0 0 1 7.6 0Z"/><path fill="#519aba" transform="rotate(180 10.65 10.65)" d="M7.6 0H12.7A2.5 2.5 0 0 1 15.2 2.5V8A2.5 2.5 0 0 1 12.7 10.5H7.7A2.5 2.5 0 0 0 5.2 13V14A1.5 1.5 0 0 1 3.7 15.5H2.5A2.5 2.5 0 0 1 0 13V8A2.5 2.5 0 0 1 2.5 5.5H10V4.9H5.1V2.5A2.5 2.5 0 0 1 7.6 0Z"/><circle cx="7.7" cy="2.6" r="0.75" fill="#1e1e1e"/><circle cx="13.6" cy="18.7" r="0.75" fill="#1e1e1e"/></svg><div style="position:absolute;left:64px;top:80px;font-family:'Liberation Sans', sans-serif;font-size:27.5px;line-height:40px;color:#ffffff;white-space:pre;font-style:italic;">blueprint.py</div><svg style="position:absolute;left:227px;top:89px" width="20" height="20" viewBox="0 0 20 20"><path d="M2 2 L18 18 M18 2 L2 18" stroke="#ffffff" stroke-width="2.2"/></svg></div></div><div style="position:absolute;left:1170px;top:64px;width:247px;height:70px;background:#2d2d2d;overflow:hidden"><div style="position:absolute;left:0;top:-64px;width:247px;height:200px"><svg style="position:absolute;left:30.5px;top:91.3px" width="20" height="16" viewBox="0 0 20 15.4"><path fill="#e37933" d="M7.7 0L0 7.7L7.7 15.4V12.6L2.8 7.7L7.7 2.8ZM12.3 0L20 7.7L12.3 15.4V12.6L17.2 7.7L12.3 2.8Z"/></svg><div style="position:absolute;left:64px;top:80px;font-family:'Liberation Sans', sans-serif;font-size:27.5px;line-height:40px;color:#969696;white-space:pre;">index.html</div></div></div><div style="position:absolute;left:1419px;top:64px;width:283px;height:70px;background:#2d2d2d;overflow:hidden"><div style="position:absolute;left:0;top:-64px;width:283px;height:200px"><svg style="position:absolute;left:30.5px;top:91.3px" width="20" height="16" viewBox="0 0 20 15.4"><path fill="#e37933" d="M7.7 0L0 7.7L7.7 15.4V12.6L2.8 7.7L7.7 2.8ZM12.3 0L20 7.7L12.3 15.4V12.6L17.2 7.7L12.3 2.8Z"/></svg><div style="position:absolute;left:64px;top:80px;font-family:'Liberation Sans', sans-serif;font-size:27.5px;line-height:40px;color:#969696;white-space:pre;">changes.html</div></div></div><div style="position:absolute;left:1704px;top:64px;width:238px;height:70px;background:#2d2d2d;overflow:hidden"><div style="position:absolute;left:0;top:-64px;width:238px;height:200px"><div style="position:absolute;left:29px;top:88px;font:bold 20.5px/21px 'Liberation Sans', sans-serif;color:#cbcb41;letter-spacing:-1.6px">JS</div><div style="position:absolute;left:64px;top:80px;font-family:'Liberation Sans', sans-serif;font-size:27.5px;line-height:40px;color:#969696;white-space:pre;">script.js</div></div></div><div style="position:absolute;left:1944px;top:64px;width:192px;height:70px;background:#2d2d2d;overflow:hidden"><div style="position:absolute;left:0;top:-64px;width:192px;height:200px"><svg style="position:absolute;left:35px;top:89.5px" width="19" height="19" viewBox="0 0 19 19"><path d="M1 1.5h16.8M1 6.5h9.2M1 11.5h16.8M1 16.5h12.4" stroke="#cccccc" stroke-width="2.2" stroke-linecap="round"/></svg><div style="position:absolute;left:65px;top:80px;font-family:'Liberation Sans', sans-serif;font-size:27.5px;line-height:40px;color:#969696;white-space:pre;">config.ini.example</div></div></div><svg style="position:absolute;left:2140px;top:78px" width="408" height="44" viewBox="0 0 408 44"><g fill="none" stroke="#cccccc" stroke-width="2.2">
<path d="M17 9.5 L36 22 L17 34.5 Z"/>
<path d="M51 18 L57 24 L63 18"/>
<circle cx="108.4" cy="20" r="9.5"/><path d="M88 20 H99 M94.5 13.5 L88 20 L94.5 26.5 M118 20 H120"/>
<circle cx="156.8" cy="20" r="9.5" stroke="#8a8a8a"/><path stroke="#8a8a8a" d="M141.8 20 H147.3 M166.3 20 H171.4"/>
<circle cx="202.8" cy="20" r="9.5" stroke="#8a8a8a"/><path stroke="#8a8a8a" d="M192 20 H193.3 M212.3 20 H224 M217.5 13.5 L224 20 L217.5 26.5"/>
<circle cx="260" cy="20.6" r="15.5"/>
<rect x="300" y="7.5" width="25.5" height="25" rx="2"/><path d="M312.8 7.5 V32.5"/>
</g>
<g fill="#cccccc"><circle cx="255" cy="12.5" r="3"/><circle cx="255" cy="28.5" r="3"/><circle cx="265" cy="21.5" r="3"/></g>
<path d="M255 12.5 V28.5 M255 12.5 L265 21.5" stroke="#cccccc" stroke-width="2"/>
<g fill="#cccccc"><circle cx="352" cy="22" r="2.3"/><circle cx="364" cy="22" r="2.3"/><circle cx="376" cy="22" r="2.3"/></g>
</svg><div style="position:absolute;left:664px;top:134px;width:1884px;height:44px;background:#1e1e1e;"></div><div style="position:absolute;left:696px;top:135px;font-family:'Liberation Sans', sans-serif;font-size:27px;line-height:44px;color:#a9a9a9;white-space:pre;">src</div><svg style="position:absolute;left:746px;top:146px" width="12" height="20" viewBox="0 0 12 20"><path d="M1.5 1 L10.5 10 L1.5 19" fill="none" stroke="#a9a9a9" stroke-width="2"/></svg><div style="position:absolute;left:766px;top:135px;font-family:'Liberation Sans', sans-serif;font-size:27px;line-height:44px;color:#a9a9a9;white-space:pre;">e1004</div><svg style="position:absolute;left:853px;top:146px" width="12" height="20" viewBox="0 0 12 20"><path d="M1.5 1 L10.5 10 L1.5 19" fill="none" stroke="#a9a9a9" stroke-width="2"/></svg><div style="position:absolute;left:874px;top:135px;font-family:'Liberation Sans', sans-serif;font-size:27px;line-height:44px;color:#a9a9a9;white-space:pre;">changelog_api</div><svg style="position:absolute;left:1063px;top:146px" width="12" height="20" viewBox="0 0 12 20"><path d="M1.5 1 L10.5 10 L1.5 19" fill="none" stroke="#a9a9a9" stroke-width="2"/></svg><svg style="position:absolute;left:1092px;top:145px" width="21.3" height="21.3" viewBox="0 0 21.3 21.3"><path fill="#519aba" d="M7.6 0H12.7A2.5 2.5 0 0 1 15.2 2.5V8A2.5 2.5 0 0 1 12.7 10.5H7.7A2.5 2.5 0 0 0 5.2 13V14A1.5 1.5 0 0 1 3.7 15.5H2.5A2.5 2.5 0 0 1 0 13V8A2.5 2.5 0 0 1 2.5 5.5H10V4.9H5.1V2.5A2.5 2.5 0 0 1 7.6 0Z"/><path fill="#519aba" transform="rotate(180 10.65 10.65)" d="M7.6 0H12.7A2.5 2.5 0 0 1 15.2 2.5V8A2.5 2.5 0 0 1 12.7 10.5H7.7A2.5 2.5 0 0 0 5.2 13V14A1.5 1.5 0 0 1 3.7 15.5H2.5A2.5 2.5 0 0 1 0 13V8A2.5 2.5 0 0 1 2.5 5.5H10V4.9H5.1V2.5A2.5 2.5 0 0 1 7.6 0Z"/><circle cx="7.7" cy="2.6" r="0.75" fill="#1e1e1e"/><circle cx="13.6" cy="18.7" r="0.75" fill="#1e1e1e"/></svg><div style="position:absolute;left:1127px;top:135px;font-family:'Liberation Sans', sans-serif;font-size:27px;line-height:44px;color:#a9a9a9;white-space:pre;">blueprint.py</div><svg style="position:absolute;left:1283px;top:146px" width="12" height="20" viewBox="0 0 12 20"><path d="M1.5 1 L10.5 10 L1.5 19" fill="none" stroke="#a9a9a9" stroke-width="2"/></svg><svg style="position:absolute;left:1306px;top:143px" width="28" height="28" viewBox="0 0 28 28"><g fill="none" stroke="#b180d7" stroke-width="2.2" stroke-linejoin="round"><path d="M14 2 L25 8 V20 L14 26 L3 20 V8 Z M3 8 L14 14 L25 8 M14 14 V26"/></g></svg><div style="position:absolute;left:1342px;top:135px;font-family:'Liberation Sans', sans-serif;font-size:27px;line-height:44px;color:#a9a9a9;white-space:pre;">release_version</div><div style="position:absolute;left:0;top:178px;width:2548px;height:1320px;overflow:hidden"><div style="position:absolute;left:0;top:-178px;width:2548px;height:1498px"><div class="ln" style="top:174px"><div class="num">115</div><div class="guide" style="left:132.0px"></div><div class="guide" style="left:189.8px"></div><div class="code"><span class="ws">        </span><span class="kw">return</span><span class="ws"> </span>str<span class="b1">(</span>req<span class="b2">[</span><span class="str">"body"</span><span class="b2">]</span><span class="b1">)</span></div></div><div class="ln" style="top:210px"><div class="num">116</div><div class="guide" style="left:132.0px"></div><div class="code"><span class="ws">    </span><span class="kw">except</span><span class="ws"> </span>KeyError:</div></div><div class="ln" style="top:246px"><div class="num">117</div><div class="guide" style="left:132.0px"></div><div class="guide" style="left:189.8px"></div><div class="code"><span class="ws">        </span><span class="kw">raise</span><span class="ws"> </span>Error<span class="b1">(</span><span class="str">"body<span class=ws> </span>missing"</span>,<span class="ws"> </span><span class="str">"VALUE_MISSING"</span><span class="b1">)</span><span class="ws"> </span><span class="kw">from</span><span class="ws"> </span><span class="kw">None</span></div></div><div class="ln" style="top:282px"><div class="num">118</div><div class="code"></div></div><div class="ln" style="top:318px"><div class="num">119</div><div class="code"></div></div><div class="ln" style="top:354px"><div class="fold"></div><svg style="position:absolute;left:105px;top:8px" width="12" height="20" viewBox="0 0 12 20"><path d="M1.5 1 L10.5 10 L1.5 19" fill="none" stroke="#c5c5c5" stroke-width="2"/></svg><div class="num">120</div><div class="code"><span class="kw">def</span><span class="ws"> </span>to_author<span class="b1">(</span>req:<span class="ws"> </span>dict<span class="b1">)</span><span class="ws"> </span>-&gt;<span class="ws"> </span>str:<span style="display:inline-block;width:13px;height:4.5px;margin-left:5px;vertical-align:6px;background:repeating-linear-gradient(90deg,#8f8f8f 0,#8f8f8f 3.5px,transparent 3.5px,transparent 4.75px)"></span></div></div><div class="ln" style="top:390px"><div class="num">125</div><div class="code"></div></div><div class="ln" style="top:426px"><div class="num">126</div><div class="code"></div></div><div class="ln" style="top:462px"><div class="num">127</div><div class="code">@version.route<span class="b1">(</span><span class="str">"/&lt;version_number&gt;/changes"</span>,<span class="ws"> </span>methods=<span class="b2">[</span><span class="str">"POST"</span><span class="b2">]</span><span class="b1">)</span></div></div><div class="ln" style="top:498px"><div class="fold"></div><svg style="position:absolute;left:105px;top:8px" width="12" height="20" viewBox="0 0 12 20"><path d="M1.5 1 L10.5 10 L1.5 19" fill="none" stroke="#c5c5c5" stroke-width="2"/></svg><div class="num">128</div><div class="code"><span class="kw">def</span><span class="ws"> </span>create_change<span class="b1">(</span>version_number:<span class="ws"> </span>str<span class="b1">)</span>:<span style="display:inline-block;width:13px;height:4.5px;margin-left:5px;vertical-align:6px;background:repeating-linear-gradient(90deg,#8f8f8f 0,#8f8f8f 3.5px,transparent 3.5px,transparent 4.75px)"></span></div></div><div class="ln" style="top:534px"><div class="num">162</div><div class="code"></div></div><div class="ln" style="top:570px"><div class="num">163</div><div class="code"></div></div><div class="ln" style="top:606px"><div class="num">164</div><div class="code">@version.route<span class="b1">(</span><span class="str">"/&lt;version_number&gt;/changes/&lt;uuid:change_id&gt;"</span>,<span class="ws"> </span>methods=<span class="b2">[</span><span class="str">"DELETE"</span><span class="b2">]</span><span class="b1">)</span></div></div><div class="ln" style="top:642px"><div class="fold"></div><svg style="position:absolute;left:105px;top:8px" width="12" height="20" viewBox="0 0 12 20"><path d="M1.5 1 L10.5 10 L1.5 19" fill="none" stroke="#c5c5c5" stroke-width="2"/></svg><div class="num">165</div><div class="code"><span class="kw">def</span><span class="ws"> </span>delete_change<span class="b1">(</span>version_number:<span class="ws"> </span>str,<span class="ws"> </span>change_id:<span class="ws"> </span>UUID<span class="b1">)</span>:<span style="display:inline-block;width:13px;height:4.5px;margin-left:5px;vertical-align:6px;background:repeating-linear-gradient(90deg,#8f8f8f 0,#8f8f8f 3.5px,transparent 3.5px,transparent 4.75px)"></span></div></div><div class="ln" style="top:678px"><div class="num">174</div><div class="code"></div></div><div class="ln" style="top:714px"><div class="num">175</div><div class="code"></div></div><div class="ln" style="top:750px"><div class="num">176</div><div class="code">@version.route<span class="b1">(</span><span class="str">"/&lt;version_number&gt;/changes"</span>,<span class="ws"> </span>methods=<span class="b2">[</span><span class="str">"GET"</span><span class="b2">]</span><span class="b1">)</span></div></div><div class="ln" style="top:786px"><div class="fold"></div><svg style="position:absolute;left:105px;top:8px" width="12" height="20" viewBox="0 0 12 20"><path d="M1.5 1 L10.5 10 L1.5 19" fill="none" stroke="#c5c5c5" stroke-width="2"/></svg><div class="num">177</div><div class="code"><span class="kw">def</span><span class="ws"> </span>read_changes_for_version<span class="b1">(</span>version_number:<span class="ws"> </span>str<span class="b1">)</span>:<span style="display:inline-block;width:13px;height:4.5px;margin-left:5px;vertical-align:6px;background:repeating-linear-gradient(90deg,#8f8f8f 0,#8f8f8f 3.5px,transparent 3.5px,transparent 4.75px)"></span></div></div><div class="ln" style="top:822px"><div class="num">186</div><div class="code"></div></div><div class="ln" style="top:858px"><div class="num">187</div><div class="code"></div></div><div class="ln" style="top:894px"><div class="fold"></div><svg style="position:absolute;left:105px;top:8px" width="12" height="20" viewBox="0 0 12 20"><path d="M1.5 1 L10.5 10 L1.5 19" fill="none" stroke="#c5c5c5" stroke-width="2"/></svg><div class="num">188</div><div class="code"><span class="kw">def</span><span class="ws"> </span>to_target_version_number<span class="b1">(</span>req:<span class="ws"> </span>dict<span class="b1">)</span><span class="ws"> </span>-&gt;<span class="ws"> </span>str:<span style="display:inline-block;width:13px;height:4.5px;margin-left:5px;vertical-align:6px;background:repeating-linear-gradient(90deg,#8f8f8f 0,#8f8f8f 3.5px,transparent 3.5px,transparent 4.75px)"></span></div></div><div class="ln" style="top:930px"><div class="num">195</div><div class="code"></div></div><div class="ln" style="top:966px"><div class="num">196</div><div class="code"></div></div><div class="ln" style="top:1002px"><div class="num">197</div><div class="code">@version.route<span class="b1">(</span><span class="str">"/&lt;version_number&gt;/changes/&lt;uuid:change_id&gt;"</span>,<span class="ws"> </span>methods=<span class="b2">[</span><span class="str">"PATCH"</span><span class="b2">]</span><span class="b1">)</span></div></div><div class="ln" style="top:1038px"><div class="num">198</div><div class="code"><span class="kw">def</span><span class="ws"> </span>move_change_to_other_version<span class="b1">(</span>version_number:<span class="ws"> </span>str,<span class="ws"> </span>change_id:<span class="ws"> </span>UUID<span class="b1">)</span>:</div></div><div class="ln" style="top:1074px"><div class="num">199</div><div class="guide" style="left:132.0px"></div><div class="code"><span class="ws">    </span>key<span class="ws"> </span>=<span class="ws"> </span>bearer_extractor.protect<span class="b1">(</span><span class="b1">)</span></div></div><div class="ln" style="top:1110px"><div class="num">200</div><div class="guide" style="left:132.0px"></div><div class="code"><span class="ws">    </span>payload<span class="ws"> </span>=<span class="ws"> </span>dict<span class="b1">(</span>request.json<span class="b1">)</span><span class="ws">  </span><span class="cm">#<span class=ws> </span>type:<span class=ws> </span>ignore[arg-type]</span></div></div><div class="ln" style="top:1146px"><div class="num">201</div><div class="guide" style="left:132.0px"></div><div class="code"><span class="ws">    </span>target_version_number<span class="ws"> </span>=<span class="ws"> </span>to_target_version_number<span class="b1">(</span>payload<span class="b1">)</span></div></div><div class="ln" style="top:1182px"><div class="num">202</div><div class="guide" style="left:132.0px"></div><div class="code"><span class="ws">    </span><span class="kw">try</span>:</div></div><div class="ln" style="top:1218px"><div class="num">203</div><div class="guide" style="left:132.0px"></div><div class="guide" style="left:189.8px"></div><div class="code"><span class="ws">        </span>change<span class="ws"> </span>=<span class="ws"> </span>service.move_change_to_other_version<span class="b1">(</span></div></div><div class="ln" style="top:1254px"><div class="num">204</div><div class="guide" style="left:132.0px"></div><div class="guide" style="left:189.8px"></div><div class="guide" style="left:247.6px"></div><div class="code"><span class="ws">            </span>version_number,<span class="ws"> </span>target_version_number,<span class="ws"> </span>key.project_id,<span class="ws"> </span>change_id</div></div><div class="ln" style="top:1290px"><div class="num">205</div><div class="guide" style="left:132.0px"></div><div class="guide" style="left:189.8px"></div><div class="code"><span class="ws">        </span><span class="b1">)</span></div></div><div class="ln" style="top:1326px"><div class="num">206</div><div class="guide" style="left:132.0px"></div><div class="code"><span class="ws">    </span><span class="kw">except</span><span class="ws"> </span><span class="b1">(</span>VersionNumberInvalidError,<span class="ws"> </span>VersionReleasedError<span class="b1">)</span><span class="ws"> </span><span class="kw">as</span><span class="ws"> </span>nr:</div></div><div class="ln" style="top:1362px"><div class="num">207</div><div class="guide" style="left:132.0px"></div><div class="guide" style="left:189.8px"></div><div class="code"><span class="ws">        </span><span class="kw">raise</span><span class="ws"> </span>ErrorGroup<span class="b1">(</span><span class="str">"400"</span>,<span class="ws"> </span><span class="b2">[</span>Error<span class="b3">(</span>nr.message,<span class="ws"> </span>nr.code<span class="b3">)</span><span class="b2">]</span><span class="b1">)</span><span class="ws"> </span><span class="kw">from</span><span class="ws"> </span><span class="kw">None</span></div></div><div class="ln" style="top:1398px"><div class="num">208</div><div class="guide" style="left:132.0px"></div><div class="code"><span class="ws">    </span><span class="kw">except</span><span class="ws"> </span><span class="b1">(</span>VersionNotFoundError,<span class="ws"> </span>ChangeNotFoundError<span class="b1">)</span><span class="ws"> </span><span class="kw">as</span><span class="ws"> </span>nt:</div></div><div class="ln" style="top:1434px"><div class="num">209</div><div class="guide" style="left:132.0px"></div><div class="guide" style="left:189.8px"></div><div class="code"><span class="ws">        </span><span class="kw">raise</span><span class="ws"> </span>ErrorGroup<span class="b1">(</span><span class="str">"404"</span>,<span class="ws"> </span><span class="b2">[</span>Error<span class="b3">(</span>nt.message,<span class="ws"> </span>nt.code<span class="b3">)</span><span class="b2">]</span><span class="b1">)</span><span class="ws"> </span><span class="kw">from</span><span class="ws"> </span><span class="kw">None</span></div></div><div class="ln" style="top:1470px"><div class="num">210</div><div class="guide" style="left:132.0px"></div><div class="code"><span class="ws">    </span><span class="kw">return</span><span class="ws"> </span><span class="b1">{</span><span class="str">"change"</span>:<span class="ws"> </span>change<span class="b1">}</span></div></div></div></div><div style="position:absolute;left:664px;top:178px;width:1884px;height:8px;background:linear-gradient(rgba(0,0,0,0.5),rgba(0,0,0,0));"></div><div style="position:absolute;left:2522px;top:178px;width:1px;height:1320px;background:#2c2c2c;"></div><div style="position:absolute;left:2523px;top:740px;width:25px;height:4px;background:#838383;"></div></body></html>
